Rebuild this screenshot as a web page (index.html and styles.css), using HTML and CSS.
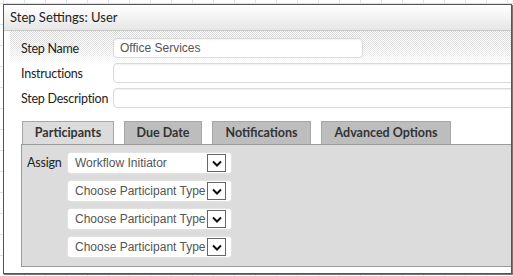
FILE: index.html
```html
<!DOCTYPE html>
<html lang="en">
<head>
    <meta charset="UTF-8">
    <title>Step Settings: User</title>
    <link rel="stylesheet" href="styles.css">
</head>
<body>
    <div class="window">
        <div class="title-bar">Step Settings: User</div>
        <div class="form">
            <div class="row first">
                <label>Step Name</label>
                <div class="field short">Office Services</div>
            </div>
            <div class="row">
                <label>Instructions</label>
                <div class="field"></div>
            </div>
            <div class="row">
                <label>Step Description</label>
                <div class="field"></div>
            </div>
        </div>
        <div class="tabs">
            <div class="tab active">Participants</div>
            <div class="tab">Due Date</div>
            <div class="tab">Notifications</div>
            <div class="tab">Advanced Options</div>
        </div>
        <div class="panel">
            <div class="assign">
                <span class="assign-label">Assign</span>
                <div class="selects">
                    <div class="select"><span>Workflow Initiator</span><span class="arrow"><svg width="10" height="7" viewBox="0 0 10 7"><path d="M1 1.5 L5 5.5 L9 1.5" fill="none" stroke="#111" stroke-width="2"/></svg></span></div>
                    <div class="select"><span>Choose Participant Type</span><span class="arrow"><svg width="10" height="7" viewBox="0 0 10 7"><path d="M1 1.5 L5 5.5 L9 1.5" fill="none" stroke="#111" stroke-width="2"/></svg></span></div>
                    <div class="select"><span>Choose Participant Type</span><span class="arrow"><svg width="10" height="7" viewBox="0 0 10 7"><path d="M1 1.5 L5 5.5 L9 1.5" fill="none" stroke="#111" stroke-width="2"/></svg></span></div>
                    <div class="select"><span>Choose Participant Type</span><span class="arrow"><svg width="10" height="7" viewBox="0 0 10 7"><path d="M1 1.5 L5 5.5 L9 1.5" fill="none" stroke="#111" stroke-width="2"/></svg></span></div>
                </div>
            </div>
        </div>
    </div>
</body>
</html>
```

FILE: styles.css
```css
body {
    margin: 0;
    width: 513px;
    height: 276px;
    overflow: hidden;
    font-family: Lato, sans-serif;
    background-color: #fff;
    background-image:
        linear-gradient(to right, #d6e2ee 1px, transparent 1px),
        linear-gradient(to bottom, #d6e2ee 1px, transparent 1px);
    background-size: 21px 21px;
    background-position: 3px 3px;
}
.window {
    margin: 4px 0 0 3px;
    width: 507px;
    height: 268px;
    background: #fff;
    border: 1px solid #555;
    box-shadow: 1px 1px 0 #777;
    overflow: hidden;
}
.title-bar {
    height: 25px;
    line-height: 25px;
    padding-left: 6px;
    font-size: 13px;
    color: #222;
    background: linear-gradient(to bottom, #fff, #e6e6e6);
    border-bottom: 1px solid #c8c8c8;
}
.form {
    margin-left: 6px;
    padding-top: 7px;
    background:
        linear-gradient(to bottom, rgba(255, 255, 255, 0) 0, rgba(255, 255, 255, 0.4) 20px, #fff 34px),
        repeating-conic-gradient(#d4d4d4 0 25%, #fff 0 50%) 0 0 / 2px 2px;
}
.row {
    display: flex;
    align-items: center;
    height: 20px;
    margin-bottom: 5px;
}
.row label {
    flex: none;
    width: 92px;
    padding-left: 11px;
    font-size: 12.5px;
    letter-spacing: -0.25px;
    color: #222;
    white-space: nowrap;
}
.field {
    flex: 1;
    height: 18px;
    line-height: 18px;
    padding-left: 6px;
    background: #fff;
    border: 1px solid #dadada;
    border-radius: 4px;
    box-shadow: inset 0 1px 2px rgba(0, 0, 0, 0.06);
    font-family: "Liberation Sans", Arial, sans-serif;
    font-size: 12px;
    color: #555;
    margin-right: -10px;
}
.field.short {
    flex: none;
    width: 242px;
    margin-right: 0;
}
.tabs {
    display: flex;
    gap: 10px;
    margin: 13px 0 0 18px;
}
.tab {
    height: 22px;
    line-height: 22px;
    font-size: 12.5px;
    font-weight: bold;
    color: #333;
    text-align: center;
    white-space: nowrap;
    background: #bdbdbd;
    border: 1px solid #a6a6a6;
    border-bottom: none;
}
.tab.active {
    background: #dcdcdc;
}
.tabs .tab:nth-child(1) { width: 90px; }
.tabs .tab:nth-child(2) { width: 76px; }
.tabs .tab:nth-child(3) { width: 97px; }
.tabs .tab:nth-child(4) { width: 128px; }
.panel {
    margin-left: 17px;
    margin-right: -10px;
    height: 121px;
    background: #dcdcdc;
    border: 1px solid #9a9a9a;
}
.assign {
    display: flex;
    padding: 8px 0 0 5px;
}
.assign-label {
    width: 41px;
    font-size: 12.5px;
    letter-spacing: -0.2px;
    color: #222;
    line-height: 20px;
}
.selects {
    display: flex;
    flex-direction: column;
    gap: 8px;
}
.select {
    display: flex;
    align-items: center;
    justify-content: space-between;
    width: 156px;
    height: 20px;
    padding-left: 7px;
    background: #fff;
    border-radius: 3px;
    box-shadow: 0 0 2px #f4f4f4;
    font-family: "Liberation Sans", Arial, sans-serif;
    font-size: 12px;
    color: #555;
    white-space: nowrap;
}
.arrow {
    display: flex;
    align-items: center;
    justify-content: center;
    flex: none;
    width: 17px;
    height: 16px;
    margin-right: 5px;
    border: 1px solid #666;
    background: #fff;
}
```
